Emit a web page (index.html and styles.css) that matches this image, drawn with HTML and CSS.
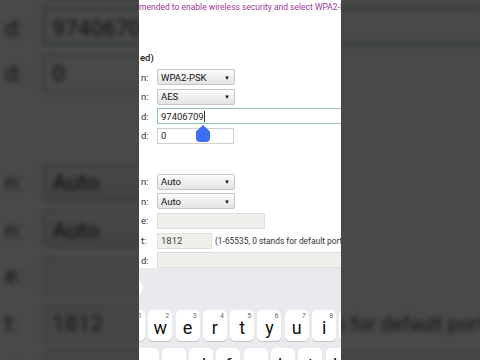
FILE: index.html
```html
<!DOCTYPE html>
<html lang="en">
<head>
<meta charset="utf-8">
<title>Wireless security</title>
<link rel="stylesheet" href="styles.css">
</head>
<body>
<main class="stage">
  <div class="backdrop" aria-hidden="true">
    <div class="screen">
      <p class="notice">mended to enable wireless security and select WPA2-PSK encryption method.</p>
      <p class="heading">ed)</p>
      <div class="form">
        <div class="group">
          <div class="row"><span class="lbl">n:</span><div class="select">WPA2-PSK<span class="caret">&#9660;</span></div></div>
          <div class="row"><span class="lbl">n:</span><div class="select">AES<span class="caret">&#9660;</span></div></div>
          <div class="row"><span class="lbl">d:</span><div class="input input--focus">97406709</div></div>
          <div class="row"><span class="lbl">d:</span><div class="input input--short">0</div></div>
        </div>
        <div class="group group--second">
          <div class="row"><span class="lbl">n:</span><div class="select">Auto<span class="caret">&#9660;</span></div></div>
          <div class="row"><span class="lbl">n:</span><div class="select">Auto<span class="caret">&#9660;</span></div></div>
          <div class="row"><span class="lbl">e:</span><div class="input input--off input--mid"></div></div>
          <div class="row"><span class="lbl">t:</span><div class="input input--off input--port">1812</div><span class="hint">(1-65535, 0 stands for default port)</span></div>
          <div class="row"><span class="lbl">d:</span><div class="input input--off input--wide"></div></div>
        </div>
      </div>
    </div>
  </div>

  <div class="screen screen--front">
    <p class="notice">mended to enable wireless security and select WPA2-PSK encryption method.</p>
    <p class="heading">ed)</p>
    <div class="form">
      <div class="group">
        <div class="row"><span class="lbl">n:</span><div class="select">WPA2-PSK<span class="caret">&#9660;</span></div></div>
        <div class="row"><span class="lbl">n:</span><div class="select">AES<span class="caret">&#9660;</span></div></div>
        <div class="row row--focus"><span class="lbl">d:</span><div class="input input--focus">97406709<span class="cursor"></span></div>
          <svg class="handle" width="14" height="17" viewBox="0 0 14 17"><path d="M7 0 L14 6.5 V13 A4 4 0 0 1 10 17 H4 A4 4 0 0 1 0 13 V6.5 Z" fill="#3d6ff2"/></svg>
        </div>
        <div class="row"><span class="lbl">d:</span><div class="input input--short">0</div></div>
      </div>
      <div class="group group--second">
        <div class="row"><span class="lbl">n:</span><div class="select">Auto<span class="caret">&#9660;</span></div></div>
        <div class="row"><span class="lbl">n:</span><div class="select">Auto<span class="caret">&#9660;</span></div></div>
        <div class="row"><span class="lbl">e:</span><div class="input input--off input--mid"></div></div>
        <div class="row"><span class="lbl">t:</span><div class="input input--off input--port">1812</div><span class="hint">(1-65535, 0 stands for default port)</span></div>
        <div class="row"><span class="lbl">d:</span><div class="input input--off input--wide"></div></div>
      </div>
    </div>

    <div class="keyboard">
      <div class="strip"><span class="strip-btn"></span></div>
      <div class="keys keys--top">
        <span class="key">q<sup>1</sup></span>
        <span class="key">w<sup>2</sup></span>
        <span class="key">e<sup>3</sup></span>
        <span class="key">r<sup>4</sup></span>
        <span class="key">t<sup>5</sup></span>
        <span class="key">y<sup>6</sup></span>
        <span class="key">u<sup>7</sup></span>
        <span class="key">i<sup>8</sup></span>
        <span class="key">o<sup>9</sup></span>
      </div>
      <div class="keys keys--mid">
        <span class="key">a</span>
        <span class="key">s</span>
        <span class="key">d</span>
        <span class="key">f</span>
        <span class="key">g</span>
        <span class="key">h</span>
        <span class="key">j</span>
        <span class="key">k</span>
      </div>
    </div>
  </div>
</main>
</body>
</html>
```

FILE: styles.css
```css
* { box-sizing: border-box; }

body {
  margin: 0;
  background: #4a4a4a;
}

.stage {
  position: relative;
  width: 480px;
  height: 360px;
  overflow: hidden;
  display: flex;
  justify-content: center;
  background: #4a4a4a;
  font-family: Roboto, "Noto Sans", "Liberation Sans", sans-serif;
}

.backdrop {
  position: absolute;
  inset: 0;
  overflow: hidden;
}

.backdrop .screen {
  transform-origin: 0 0;
  transform: translate(0, -250px) scale(2.38);
  filter: blur(1.1px) contrast(0.85) brightness(0.31);
}

.screen {
  width: 202px;
  height: 360px;
  flex: none;
  background: #fff;
  overflow: hidden;
  display: flex;
  flex-direction: column;
  color: #222;
}

.screen--front {
  position: relative;
  z-index: 1;
}

.notice {
  margin: 2px 0 0;
  font-size: 8.5px;
  line-height: 11px;
  color: #a1389b;
  white-space: nowrap;
}

.heading {
  margin: 39px 0 0 1px;
  font-size: 9.5px;
  line-height: 12px;
  font-weight: 500;
  color: #222;
}

.form {
  margin-top: 5px;
  display: flex;
  flex-direction: column;
}

.group {
  display: flex;
  flex-direction: column;
  gap: 3.6px;
}

.group--second {
  margin-top: 30px;
}

.row {
  position: relative;
  display: flex;
  align-items: center;
  height: 16px;
  font-size: 9.5px;
  white-space: nowrap;
}

.row--focus {
  z-index: 2;
}

.lbl {
  width: 18px;
  flex: none;
  padding-left: 2px;
  color: #333;
}

.select {
  position: relative;
  width: 78px;
  height: 16px;
  flex: none;
  display: flex;
  align-items: center;
  padding-left: 3px;
  border: 1px solid #c6c6c6;
  border-radius: 2px;
  background: linear-gradient(#fbfbfb, #e4e4e4);
  color: #111;
}

.caret {
  margin-left: auto;
  margin-right: 4px;
  font-size: 6px;
  color: #111;
}

.input {
  height: 16px;
  flex: none;
  display: flex;
  align-items: center;
  padding-left: 3px;
  border: 1px solid #cfcfcf;
  background: #fff;
  color: #222;
}

.input--focus {
  width: 200px;
  border-color: #8cc3b4;
}

.cursor {
  width: 1px;
  height: 11px;
  margin-left: 0.5px;
  background: #333;
}

.handle {
  position: absolute;
  left: 57px;
  top: 17px;
}

.input--short { width: 77px; }

.input--off {
  background: #efefeb;
  border-color: #dedede;
  color: #444;
}

.input--mid { width: 108px; }
.input--port { width: 55px; }
.input--wide { width: 200px; }

.hint {
  margin-left: 3px;
  font-size: 8.4px;
  color: #333;
}

.keyboard {
  margin-top: auto;
  height: 92px;
  flex: none;
  overflow: hidden;
  background: #e9e9ee;
  display: flex;
  flex-direction: column;
}

.strip {
  height: 42px;
  flex: none;
  display: flex;
  align-items: center;
}

.strip-btn {
  width: 16px;
  height: 16px;
  margin-left: -12px;
  margin-top: -2px;
  border-radius: 50%;
  background: #fff;
}

.keys {
  display: flex;
  gap: 3.3px;
  flex: none;
}

.keys--top { margin-left: -18px; }
.keys--mid { margin-left: -4.5px; margin-top: 7px; }

.key {
  position: relative;
  width: 24px;
  height: 31px;
  flex: none;
  display: flex;
  align-items: center;
  justify-content: center;
  padding-top: 3px;
  border-radius: 5px;
  background: #fff;
  box-shadow: 0 1px 0 #c3c3c8;
  font-size: 18px;
  color: #111;
}

.key sup {
  position: absolute;
  top: 2px;
  right: 3px;
  font-size: 7px;
  line-height: 8px;
  color: #666;
}
```
